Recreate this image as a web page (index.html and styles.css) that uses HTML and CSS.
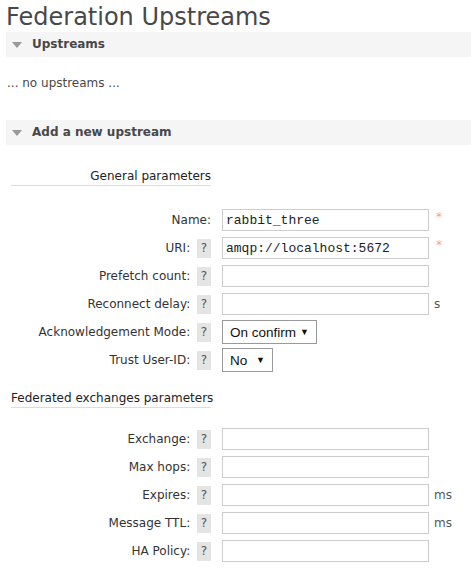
FILE: index.html
```html
<!DOCTYPE html>
<html>
<head>
<meta charset="utf-8">
<link rel="stylesheet" href="styles.css">
</head>
<body>
<h1 class="title">Federation Upstreams</h1>
<div class="section">
  <h2 class="bar"><span class="tri"></span>Upstreams</h2>
  <p class="empty">... no upstreams ...</p>
</div>
<div class="section">
  <h2 class="bar"><span class="tri"></span>Add a new upstream</h2>
  <div class="form">
    <div class="group-head right">General parameters</div>
    <div class="spacer"></div>

    <div class="label first-gen">Name:</div>
    <div class="field first-gen"><input class="txt mono" type="text" value="rabbit_three"></div>
    <div class="suffix first-gen"><span class="req">*</span></div>

    <div class="label">URI: <span class="help">?</span></div>
    <div class="field"><input class="txt mono" type="text" value="amqp://localhost:5672"></div>
    <div class="suffix"><span class="req">*</span></div>

    <div class="label">Prefetch count: <span class="help">?</span></div>
    <div class="field"><input class="txt" type="text"></div>
    <div class="suffix"></div>

    <div class="label">Reconnect delay: <span class="help">?</span></div>
    <div class="field"><input class="txt" type="text"></div>
    <div class="suffix">s</div>

    <div class="label">Acknowledgement Mode: <span class="help">?</span></div>
    <div class="field"><span class="sel sel-ack">On confirm<span class="arr">&#9660;</span></span></div>
    <div class="suffix"></div>

    <div class="label">Trust User-ID: <span class="help">?</span></div>
    <div class="field"><span class="sel sel-no">No<span class="arr">&#9660;</span></span></div>
    <div class="suffix"></div>

    <div class="group-head left fed">Federated exchanges parameters</div>
    <div class="spacer"></div>

    <div class="label first-fed">Exchange: <span class="help">?</span></div>
    <div class="field first-fed"><input class="txt" type="text"></div>
    <div class="suffix first-fed"></div>

    <div class="label">Max hops: <span class="help">?</span></div>
    <div class="field"><input class="txt" type="text"></div>
    <div class="suffix"></div>

    <div class="label">Expires: <span class="help">?</span></div>
    <div class="field"><input class="txt" type="text"></div>
    <div class="suffix">ms</div>

    <div class="label">Message TTL: <span class="help">?</span></div>
    <div class="field"><input class="txt" type="text"></div>
    <div class="suffix">ms</div>

    <div class="label">HA Policy: <span class="help">?</span></div>
    <div class="field"><input class="txt" type="text"></div>
    <div class="suffix"></div>
  </div>
</div>
</body>
</html>
```

FILE: styles.css
```css
html, body {
  margin: 0;
  padding: 0;
  background: #fff;
}
body {
  font-family: "DejaVu Sans", Verdana, sans-serif;
  font-size: 12px;
  color: #484848;
  padding-left: 6px;
  overflow: hidden;
}
.title {
  font-weight: normal;
  font-size: 24px;
  line-height: 28px;
  margin: 3px 0 0 0;
  height: 29px;
  color: #484848;
}
.bar {
  margin: 0;
  height: 25px;
  line-height: 25px;
  background: #f5f5f5;
  font-size: 12px;
  font-weight: bold;
  color: #484848;
  display: flex;
  align-items: center;
}
.tri {
  width: 0;
  height: 0;
  border-left: 5px solid transparent;
  border-right: 5px solid transparent;
  border-top: 6px solid #999;
  margin: 1px 10px 0 6px;
}
.empty {
  margin: 19px 0 0 1px;
  height: 44px;
  line-height: 14px;
}
.form {
  display: grid;
  grid-template-columns: 200px 218px 1fr;
  margin-left: 5px;
  margin-top: 24px;
}
.group-head {
  grid-column: 1;
  border-bottom: 1px solid #ddd;
  line-height: 14px;
  padding-bottom: 2px;
  color: #222;
  white-space: nowrap;
}
.group-head.right { text-align: right; }
.group-head.left { text-align: left; }
.fed { margin-top: 17px; }
.spacer {
  grid-column: 2 / 4;
}
.first-gen { margin-top: 20px; }
.first-fed { margin-top: 17px; }
.label {
  grid-column: 1;
  height: 28px;
  display: flex;
  align-items: center;
  justify-content: flex-end;
  white-space: pre;
  color: #333;
}
.help {
  display: inline-block;
  width: 14px;
  height: 19px;
  line-height: 19px;
  background: #e4e4e4;
  text-align: center;
  color: #555;
  margin-left: 3px;
  font-size: 12px;
}
.field {
  height: 28px;
  display: flex;
  align-items: center;
  padding-left: 11px;
}
.txt {
  box-sizing: border-box;
  flex: none;
  width: 207px;
  height: 22px;
  border: 1px solid #ccc;
  margin: 0;
  padding: 0 0 0 3px;
  font-size: 13px;
  color: #222;
  background: #fff;
  outline: none;
}
.mono {
  font-family: "Liberation Mono", "Courier New", monospace;
}
.suffix {
  height: 28px;
  display: flex;
  align-items: center;
  padding-left: 5px;
  color: #555;
}
.req {
  color: #f99;
  font-size: 12px;
  margin-top: -6px;
  padding-left: 2px;
}
.sel {
  box-sizing: border-box;
  height: 24px;
  border: 1px solid #999;
  display: inline-flex;
  align-items: center;
  font-family: "Liberation Sans", Arial, sans-serif;
  font-size: 13.5px;
  color: #111;
  padding-left: 7px;
  background: #fff;
}
.sel-ack { width: 95px; }
.sel-no { width: 51px; }
.arr {
  font-size: 9px;
  margin-left: auto;
  margin-right: 7px;
}
```
